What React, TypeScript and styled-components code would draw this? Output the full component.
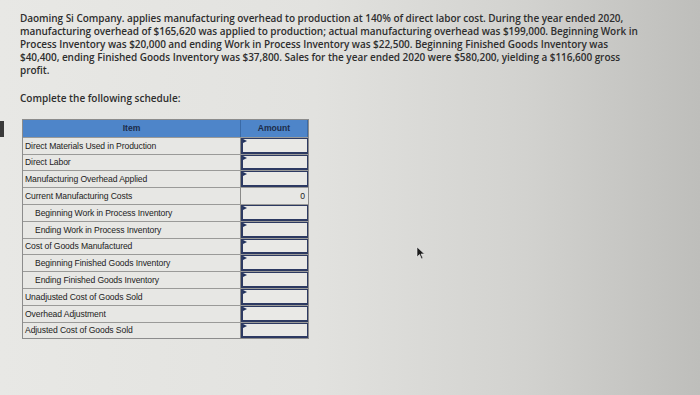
import { createGlobalStyle } from "styled-components";
import styled from "styled-components";

const GlobalStyle = createGlobalStyle`
  html, body {
    margin: 0;
    padding: 0;
  }
  body {
    width: 700px;
    height: 395px;
    overflow: hidden;
    background: linear-gradient(90deg, #e8e8e5 0%, #e2e2df 45%, #d2d2cf 75%, #bebebb 100%);
  }
`;

const Page = styled.div`
  position: relative;
  width: 700px;
  height: 395px;
  box-sizing: border-box;
  padding: 12px 0 0 20px;
  font-family: "Open Sans", "Liberation Sans", sans-serif;
  color: #2e2e2e;
`;

const Problem = styled.p`
  margin: 0;
  font-size: 10px;
  font-weight: 600;
  line-height: 13px;
  letter-spacing: -0.05px;
  white-space: nowrap;
`;

const Prompt = styled.p`
  margin: 15px 0 0;
  font-size: 10px;
  font-weight: 600;
  line-height: 13px;
`;

const TableRow = styled.div`
  display: flex;
  align-items: flex-start;
  margin: 14px 0 0 -20px;
`;

const EdgeMark = styled.div`
  width: 4px;
  height: 16px;
  margin-top: 2px;
  margin-right: 18px;
  background: #3a3a3a;
`;

const Schedule = styled.div`
  display: grid;
  grid-template-columns: 218px 67px;
  grid-auto-rows: 16.8px;
  border: 1px solid #8c8c8c;
  font-family: "Liberation Sans", Arial, sans-serif;
  font-size: 8.6px;
  color: #222;
`;

const HeadCell = styled.div`
  display: flex;
  align-items: center;
  justify-content: center;
  background: #4e85c9;
  color: #1c2c4a;
  font-weight: 700;
  border-right: 1px solid #3a6aa6;
  &:last-child {
    border-right: none;
  }
`;

const ItemCell = styled.div<{ $indent?: boolean }>`
  display: flex;
  align-items: center;
  padding-left: ${(p) => (p.$indent ? "12px" : "2px")};
  border-top: 1px solid #9a9a98;
  border-right: 1px solid #8a8a88;
  background: #e7e7e4;
  white-space: nowrap;
  letter-spacing: -0.1px;
`;

const AmountCell = styled.div`
  display: flex;
  align-items: stretch;
  justify-content: flex-end;
  border-top: 1px solid #9a9a98;
  background: #e7e7e4;
`;

const Total = styled.span`
  align-self: center;
  padding-right: 3px;
  font-size: 8.6px;
`;

const InputBox = styled.div`
  position: relative;
  flex: 1;
  border: 2px solid #2d3a62;
  border-top-width: 1px;
  border-right-width: 1.5px;
  background: #e9e9e6;
  &::before {
    content: "";
    position: absolute;
    left: 0;
    top: 0;
    border-left: 4px solid #22335e;
    border-top: 2px solid transparent;
    border-bottom: 2px solid transparent;
  }
`;

const Pointer = styled.svg`
  position: absolute;
  left: 416px;
  top: 246px;
`;

type Row = { label: string; indent?: boolean; total?: string };

const rows: Row[] = [
  { label: "Direct Materials Used in Production" },
  { label: "Direct Labor" },
  { label: "Manufacturing Overhead Applied" },
  { label: "Current Manufacturing Costs", total: "0" },
  { label: "Beginning Work in Process Inventory", indent: true },
  { label: "Ending Work in Process Inventory", indent: true },
  { label: "Cost of Goods Manufactured" },
  { label: "Beginning Finished Goods Inventory", indent: true },
  { label: "Ending Finished Goods Inventory", indent: true },
  { label: "Unadjusted Cost of Goods Sold" },
  { label: "Overhead Adjustment" },
  { label: "Adjusted Cost of Goods Sold" },
];

const lines = [
  "Daoming Si Company. applies manufacturing overhead to production at 140% of direct labor cost. During the year ended 2020,",
  "manufacturing overhead of $165,620 was applied to production; actual manufacturing overhead was $199,000. Beginning Work in",
  "Process Inventory was $20,000 and ending Work in Process Inventory was $22,500. Beginning Finished Goods Inventory was",
  "$40,400, ending Finished Goods Inventory was $37,800. Sales for the year ended 2020 were $580,200, yielding a $116,600 gross",
  "profit.",
];

export default function App() {
  return (
    <>
      <GlobalStyle />
      <Page>
        <Problem>
          {lines.map((l, i) => (
            <span key={i}>
              {l}
              {i < lines.length - 1 && <br />}
            </span>
          ))}
        </Problem>
        <Prompt>Complete the following schedule:</Prompt>
        <TableRow>
          <EdgeMark />
          <Schedule>
            <HeadCell>Item</HeadCell>
            <HeadCell>Amount</HeadCell>
            {rows.map((r) => (
              <>
                <ItemCell key={r.label} $indent={r.indent}>
                  {r.label}
                </ItemCell>
                <AmountCell key={r.label + "-a"}>
                  {r.total ? <Total>{r.total}</Total> : <InputBox />}
                </AmountCell>
              </>
            ))}
          </Schedule>
        </TableRow>
        <Pointer width="10" height="14" viewBox="0 0 10 14">
          <path d="M1 1 L1 11 L3.5 8.5 L5.5 13 L7 12.3 L5 8 L8.5 8 Z" fill="#1c1c1c" stroke="#f0f0f0" strokeWidth="0.6" />
        </Pointer>
      </Page>
    </>
  );
}
